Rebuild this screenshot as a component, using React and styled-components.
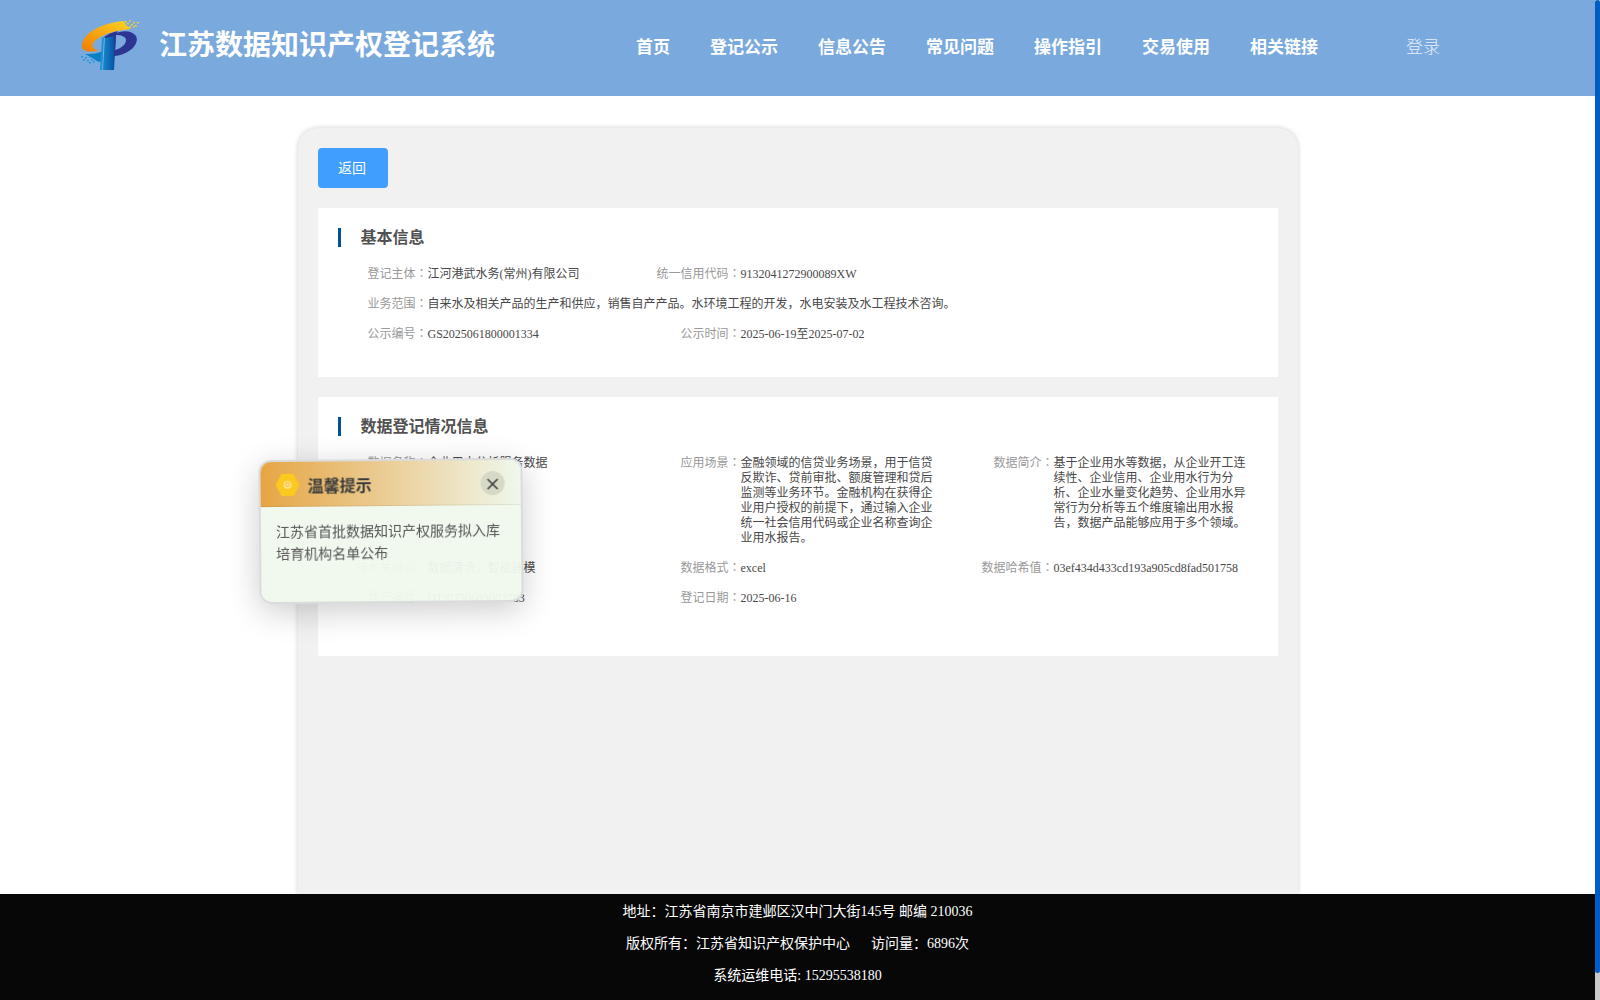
import React, { useState } from "react"
import styled, { createGlobalStyle } from "styled-components"

const GlobalStyle = createGlobalStyle`
  * {
    box-sizing: border-box;
  }
  body {
    margin: 0;
    background: #fff;
    overflow: hidden;
    font-family: "Liberation Serif", "Noto Sans CJK SC", serif;
  }
`

const Screen = styled.div`
  display: flex;
  height: 100vh;
`

const Page = styled.div`
  flex: 1;
  min-width: 0;
  display: flex;
  flex-direction: column;
`

const ScrollTrack = styled.div`
  width: 5px;
  background: #c8c8c8;
`

const ScrollThumb = styled.div`
  height: 973px;
  border-radius: 3px;
  background: #005dc4;
`

const Header = styled.header`
  flex: none;
  display: flex;
  align-items: center;
  height: 96px;
  padding-left: 80px;
  background: #79a9dd;
  color: #fff;
`

const LogoImage = styled.svg`
  flex: none;
  margin-bottom: 4px;
`

const Title = styled.h1`
  width: 477px;
  margin: 0 0 4px 19px;
  font-size: 28px;
  line-height: 40px;
  font-weight: bold;
  white-space: nowrap;
`

const Nav = styled.nav`
  display: flex;
  gap: 40px;
  font-size: 17px;
  line-height: 24px;
  font-weight: bold;
  margin-bottom: 1px;
`

const Login = styled.span`
  margin: 0 0 1px 88px;
  font-size: 17px;
  line-height: 24px;
  font-weight: 300;
  color: #e6eff9;
`

const Main = styled.main`
  flex: 1;
  min-height: 0;
  overflow: hidden;
  display: flex;
  justify-content: center;
  padding-top: 32px;
`

const Panel = styled.div`
  width: 1000px;
  padding: 20px;
  border-radius: 20px 20px 0 0;
  background: #f1f1f1;
  box-shadow: 0 0 5px rgba(0, 0, 0, 0.2);
`

const BackButton = styled.button`
  display: block;
  width: 70px;
  height: 40px;
  padding: 0 1px 2px 0;
  border: none;
  border-radius: 4px;
  background: #409eff;
  color: #fff;
  font-family: inherit;
  font-size: 14px;
`

const Card = styled.section`
  height: ${({ $height }) => $height}px;
  margin-top: 20px;
  padding: 20px 0 0 20px;
  background: #fff;
`

const CardTitle = styled.h2`
  height: 19px;
  margin: 0 0 20px;
  padding-left: 20px;
  border-left: 3px solid #005297;
  color: #515151;
  font-size: 16px;
  line-height: 19px;
`

const Fields = styled.div`
  display: grid;
  grid-template-columns: repeat(3, 313px);
  row-gap: 15px;
`

const Field = styled.div`
  display: flex;
  grid-column: span ${({ $span }) => $span || 1};
  font-size: 12px;
  line-height: 15px;
`

const Label = styled.span`
  flex: none;
  width: 90px;
  text-align: right;
  color: #999;
`

// the label colon sits in the middle of its cell
const Colon = styled.span`
  font-family: "Noto Sans CJK TC", sans-serif;
  line-height: 0;
`

const Value = styled.span`
  width: ${({ $wide }) => ($wide ? "auto" : "197px")};
  color: #484848;
`

const Footer = styled.footer`
  flex: none;
  height: 106px;
  padding-top: 2px;
  background: #070707;
  color: #fff;
  text-align: center;
  font-size: 14px;
  line-height: 32px;
`

const FooterLine = styled.div`
  white-space: pre;
`

const Tip = styled.aside`
  position: fixed;
  left: 259px;
  top: 459px;
  width: 264px;
  height: 144px;
  border: 2px solid #dadcdc;
  border-radius: 12px;
  overflow: hidden;
  background: rgba(240, 249, 237, 0.95);
  box-shadow: 0 8px 32px rgba(0, 0, 0, 0.2);
  transform: rotate(-0.5deg);
`

const TipHeader = styled.div`
  display: flex;
  align-items: center;
  height: 45px;
  padding: 1px 16px 0 15px;
  border-bottom: 1px solid rgba(0, 0, 0, 0.08);
  background: linear-gradient(90deg, #e6a23c, #f0f9ed);
  opacity: 0.95;
`

const TipTitle = styled.strong`
  flex: 1;
  margin-left: 8px;
  color: #333;
  font-size: 16px;
`

const CloseButton = styled.button`
  display: flex;
  align-items: center;
  justify-content: center;
  width: 24px;
  height: 24px;
  padding: 2px 0 0;
  border: none;
  border-radius: 50%;
  background: #d6d8c6;
`

const TipText = styled.p`
  margin: 0;
  padding: 15px;
  color: #555;
  font-size: 14px;
  line-height: 22.4px;
`

// loose squares at the two ends of the logo
const YELLOW_BITS = [
  [45, 1], [49, 0], [53, 2], [57, 2], [47, 3], [51, 4], [55, 5], [49, 6], [53, 6],
]
const BLUE_BITS = [
  [1, 36], [5, 37], [9, 36], [3, 39], [7, 40], [11, 39], [9, 42], [13, 41],
]

const Logo = () => (
  <LogoImage width="60" height="52" viewBox="0 0 60 52">
    <defs>
      <linearGradient id="orange" x1="0" y1="1" x2="1" y2="0">
        <stop offset="0" stopColor="#ef7d00" />
        <stop offset="1" stopColor="#ffd424" />
      </linearGradient>
      <linearGradient id="blue" x1="0" y1="0" x2="1" y2="0">
        <stop offset="0" stopColor="#1588cc" />
        <stop offset="1" stopColor="#064c9c" />
      </linearGradient>
    </defs>
    <path
      d="M44 1C30 2 16 7 8 14c-6 6-8 13-4 16 3 2 9 2 16 0-5 0-8-2-7-6 2-6 16-13 38-15l-5-4z"
      fill="url(#orange)"
    />
    <path d="M5 34c6 0 11 0 18-3l-1 11c-4 0-6-1-8-3z" fill="#0d7fc4" />
    <path d="M22 18l2-1-2 33h-2z" fill="#1b94d2" />
    <path d="M25 17l11-2-2 35H23z" fill="url(#blue)" />
    <path
      fillRule="evenodd"
      d="M34 14c8-4 18-4 22 2 4 8-7 19-22 20zM36 15l-1 15c7-2 11-6 11-10 0-3-4-5-10-5z"
      fill="#2c3591"
    />
    <path d="M24 17c4-3 9-5 14-6l-3 5-10 2z" fill="#2c3591" />
    {YELLOW_BITS.map(([x, y]) => (
      <rect key={`${x}-${y}`} x={x} y={y} width="1.8" height="1.5" fill="#f5d32c" />
    ))}
    {BLUE_BITS.map(([x, y]) => (
      <rect key={`${x}-${y}`} x={x} y={y} width="1.8" height="1.5" fill="#1b9ad8" />
    ))}
  </LogoImage>
)

const NAV = ["首页", "登记公示", "信息公告", "常见问题", "操作指引", "交易使用", "相关链接"]

const BASIC = [
  { label: "登记主体", value: "江河港武水务(常州)有限公司" },
  { label: "统一信用代码", value: "9132041272900089XW", span: 2 },
  {
    label: "业务范围",
    value:
      "自来水及相关产品的生产和供应，销售自产产品。水环境工程的开发，水电安装及水工程技术咨询。",
    span: 3,
  },
  { label: "公示编号", value: "GS2025061800001334" },
  { label: "公示时间", value: "2025-06-19至2025-07-02" },
]

const DATA = [
  { label: "数据名称", value: "企业用水分析服务数据" },
  {
    label: "应用场景",
    value:
      "金融领域的信贷业务场景，用于信贷反欺诈、贷前审批、额度管理和贷后监测等业务环节。金融机构在获得企业用户授权的前提下，通过输入企业统一社会信用代码或企业名称查询企业用水报告。",
  },
  {
    label: "数据简介",
    value:
      "基于企业用水等数据，从企业开工连续性、企业信用、企业用水行为分析、企业水量变化趋势、企业用水异常行为分析等五个维度输出用水报告，数据产品能够应用于多个领域。",
  },
  { label: "技术关键词", value: "数据清洗，智能建模" },
  { label: "数据格式", value: "excel" },
  { label: "数据哈希值", value: "03ef434d433cd193a905cd8fad501758" },
  { label: "登记编号", value: "DJ20250603002783" },
  { label: "登记日期", value: "2025-06-16" },
]

const InfoCard = ({ title, items, height }) => (
  <Card $height={height}>
    <CardTitle>{title}</CardTitle>
    <Fields>
      {items.map(({ label, value, span }) => (
        <Field key={label} $span={span}>
          <Label>
            {label}
            <Colon>：</Colon>
          </Label>
          <Value $wide={span > 1}>{value}</Value>
        </Field>
      ))}
    </Fields>
  </Card>
)

const Notice = ({ onClose }) => (
  <Tip>
    <TipHeader>
      <svg width="24" height="24" viewBox="0 0 24 24">
        <path d="M6 1h12l6 11-6 11H6L0 12z" fill="#fdc913" />
        <circle cx="12" cy="12" r="4" fill="#ffe58a" />
        <circle cx="12" cy="11.5" r="2" fill="none" stroke="#f3b72b" />
      </svg>
      <TipTitle>温馨提示</TipTitle>
      <CloseButton onClick={onClose} aria-label="关闭">
        <svg width="12" height="12" viewBox="0 0 12 12">
          <path d="M1 1l10 10M11 1L1 11" stroke="#333" strokeWidth="1.6" />
        </svg>
      </CloseButton>
    </TipHeader>
    <TipText>江苏省首批数据知识产权服务拟入库培育机构名单公布</TipText>
  </Tip>
)

const App = () => {
  const [isNoticeVisible, setIsNoticeVisible] = useState(true)

  return (
    <>
      <GlobalStyle />
      <Screen>
        <Page>
          <Header>
            <Logo />
            <Title>江苏数据知识产权登记系统</Title>
            <Nav>
              {NAV.map((item) => (
                <span key={item}>{item}</span>
              ))}
            </Nav>
            <Login>登录</Login>
          </Header>
          <Main>
            <Panel>
              <BackButton>返回</BackButton>
              <InfoCard title="基本信息" items={BASIC} height={169} />
              <InfoCard title="数据登记情况信息" items={DATA} height={259} />
            </Panel>
          </Main>
          <Footer>
            <FooterLine>地址：江苏省南京市建邺区汉中门大街145号 邮编 210036</FooterLine>
            <FooterLine>{"版权所有：江苏省知识产权保护中心\u00a0\u00a0\u00a0\u00a0\u00a0 访问量：6896次"}</FooterLine>
            <FooterLine>系统运维电话: 15295538180</FooterLine>
          </Footer>
        </Page>
        <ScrollTrack>
          <ScrollThumb />
        </ScrollTrack>
      </Screen>
      {isNoticeVisible ? <Notice onClose={() => setIsNoticeVisible(false)} /> : null}
    </>
  )
}

export default App
